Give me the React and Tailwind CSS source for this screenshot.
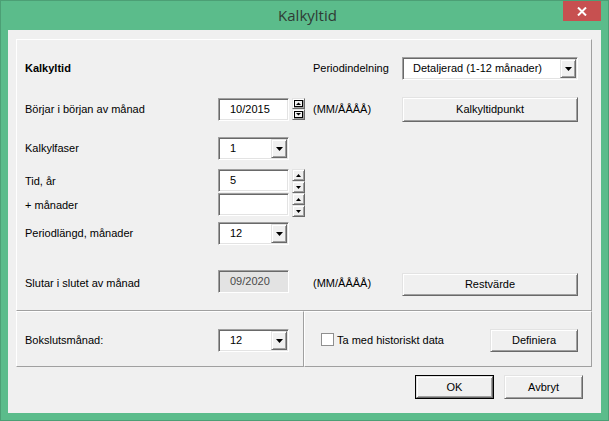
import React from 'react';

const raised =
    'border border-t-[#e3e3e3] border-l-[#e3e3e3] border-r-[#696969] border-b-[#696969] shadow-[inset_1px_1px_0_#ffffff,inset_-1px_-1px_0_#a0a0a0] bg-[#f0f0f0]';
const sunken =
    'border border-t-[#a0a0a0] border-l-[#a0a0a0] border-r-white border-b-white shadow-[inset_1px_1px_0_#696969,inset_-1px_-1px_0_#e3e3e3]';

const Arrow = () => (
    <svg width="7" height="4" viewBox="0 0 7 4">
        <path d="M0 0H7L3.5 4Z" fill="#000" />
    </svg>
);

const Dropdown = ({ value, width = 'w-[71px]', textPad = 'pl-[11px]' }) => (
    <div className={`${sunken} ${width} h-[23px] bg-white flex items-center`}>
        <span className={`flex-1 ${textPad}`}>{value}</span>
        <div className={`${raised} w-[16px] h-[19px] mr-[1px] flex items-center justify-center`}>
            <Arrow />
        </div>
    </div>
);

const Field = ({ value, disabled = false }) => (
    <div
        className={`${sunken} w-[71px] h-[23px] flex items-center pl-[11px] ${
            disabled ? 'bg-[#e3e3e3] text-[#4a4a4a]' : 'bg-white'
        }`}
    >
        {value}
    </div>
);

const Button = ({ children, className = '' }) => (
    <div className={`${raised} flex items-center justify-center ${className}`}>{children}</div>
);

// small spin arrows
const SpinPair = ({ boxed = false, className = '' }) => {
    const up = boxed ? (
        <svg width="9" height="7" viewBox="0 0 9 7">
            <rect x="0.5" y="0.5" width="8" height="6" fill="none" stroke="#000" />
            <path d="M2 5H7L4.5 2.5Z" fill="#000" />
        </svg>
    ) : (
        <svg width="5" height="3" viewBox="0 0 5 3">
            <path d="M0 3H5L2.5 0Z" fill="#000" />
        </svg>
    );
    const down = boxed ? (
        <svg width="9" height="7" viewBox="0 0 9 7">
            <rect x="0.5" y="0.5" width="8" height="6" fill="none" stroke="#000" />
            <path d="M2 2H7L4.5 4.5Z" fill="#000" />
        </svg>
    ) : (
        <svg width="5" height="3" viewBox="0 0 5 3">
            <path d="M0 0H5L2.5 3Z" fill="#000" />
        </svg>
    );
    return (
        <div className={`ml-[3px] w-[13px] flex flex-col ${className}`}>
            <div className={`${raised} flex-1 flex items-center justify-center`}>{up}</div>
            <div className={`${raised} flex-1 flex items-center justify-center`}>{down}</div>
        </div>
    );
};

const Label = ({ children, className = '' }) => <div className={`w-[193px] ${className}`}>{children}</div>;

export default function App() {
    return (
        <div
            className="w-[609px] h-[421px] bg-[#5bbc8b] border border-[#4c9f75] flex flex-col text-[11px] text-black"
            style={{ fontFamily: '"Liberation Sans", Arial, sans-serif' }}
        >
            {/* Title bar */}
            <div className="h-[29px] flex items-start relative">
                <div
                    className="flex-1 h-full flex items-center justify-center text-[15px] text-[#2f3b35] pl-[6px]"
                    style={{ fontFamily: '"Open Sans", "Noto Sans", sans-serif' }}
                >
                    Kalkyltid
                </div>
                <div className="absolute right-[7px] top-0 w-[38px] h-[20px] bg-[#c75050] flex items-center justify-center">
                    <svg width="10" height="9" viewBox="0 0 10 9">
                        <path d="M1 0.5L9 8.5M9 0.5L1 8.5" stroke="#fff" strokeWidth="2" />
                    </svg>
                </div>
            </div>

            {/* Client area */}
            <div className="ml-[7px] w-[593px] h-[383px] bg-[#f0f0f0] flex flex-col">
                {/* Main panel */}
                <div className="mt-[9px] ml-[8px] w-[576px] h-[272px] border border-t-white border-l-white border-r-[#a0a0a0] border-b-[#a0a0a0] pl-[8px] flex flex-col">
                    <div className="mt-[17px] h-[23px] flex items-center">
                        <Label className="font-bold">Kalkyltid</Label>
                        <div className="w-[95px]" />
                        <div className="w-[89px]">Periodindelning</div>
                        <Dropdown value="Detaljerad (1-12 månader)" width="w-[176px]" textPad="pl-[10px]" />
                    </div>

                    <div className="mt-[17px] h-[25px] flex items-start">
                        <Label className="h-[25px] flex items-center">Börjar i början av månad</Label>
                        <div className="mt-[1px]">
                            <Field value="10/2015" />
                        </div>
                        <SpinPair boxed className="mt-[1px] h-[22px]" />
                        <div className="ml-[8px] w-[89px] h-[25px] flex items-center">(MM/ÅÅÅÅ)</div>
                        <Button className="w-[176px] h-[25px]">Kalkyltidpunkt</Button>
                    </div>

                    <div className="mt-[15px] h-[23px] flex items-center">
                        <Label>Kalkylfaser</Label>
                        <Dropdown value="1" />
                    </div>

                    <div className="mt-[9px] h-[24px] flex items-stretch">
                        <Label className="flex items-center">Tid, år</Label>
                        <Field value="5" />
                        <SpinPair />
                    </div>

                    <div className="h-[24px] flex items-stretch">
                        <Label className="flex items-center">+ månader</Label>
                        <Field value="" />
                        <SpinPair />
                    </div>

                    <div className="mt-[5px] h-[23px] flex items-center">
                        <Label>Periodlängd, månader</Label>
                        <Dropdown value="12" />
                    </div>

                    <div className="mt-[25px] h-[26px] flex items-start">
                        <Label className="h-[26px] flex items-center">Slutar i slutet av månad</Label>
                        <Field value="09/2020" disabled />
                        <div className="ml-[24px] w-[89px] h-[26px] flex items-center">(MM/ÅÅÅÅ)</div>
                        <Button className="mt-[3px] w-[176px] h-[23px]">Restvärde</Button>
                    </div>
                </div>

                {/* Lower panels */}
                <div className="ml-[8px] flex">
                    <div className="w-[288px] h-[56px] border border-t-white border-l-white border-r-[#a0a0a0] border-b-[#a0a0a0] pl-[8px] pt-[17px] flex items-start">
                        <Label className="h-[23px] flex items-center">Bokslutsmånad:</Label>
                        <Dropdown value="12" />
                    </div>
                    <div className="w-[288px] h-[56px] border border-t-white border-l-white border-r-[#a0a0a0] border-b-[#a0a0a0] pl-[16px] pr-[13px] pt-[17px] flex items-start">
                        <div className="h-[23px] flex items-center gap-[3px]">
                            <div className="w-[13px] h-[13px] bg-white border border-[#8f8f8f] -mt-[2px]" />
                            <span>Ta med historiskt data</span>
                        </div>
                        <Button className="ml-auto w-[88px] h-[23px]">Definiera</Button>
                    </div>
                </div>

                {/* Dialog buttons */}
                <div className="mt-[8px] pr-[18px] flex justify-end gap-[10px]">
                    <div className="border border-black">
                        <Button className="w-[77px] h-[22px]">OK</Button>
                    </div>
                    <Button className="w-[79px] h-[24px]">Avbryt</Button>
                </div>
            </div>
        </div>
    );
}
